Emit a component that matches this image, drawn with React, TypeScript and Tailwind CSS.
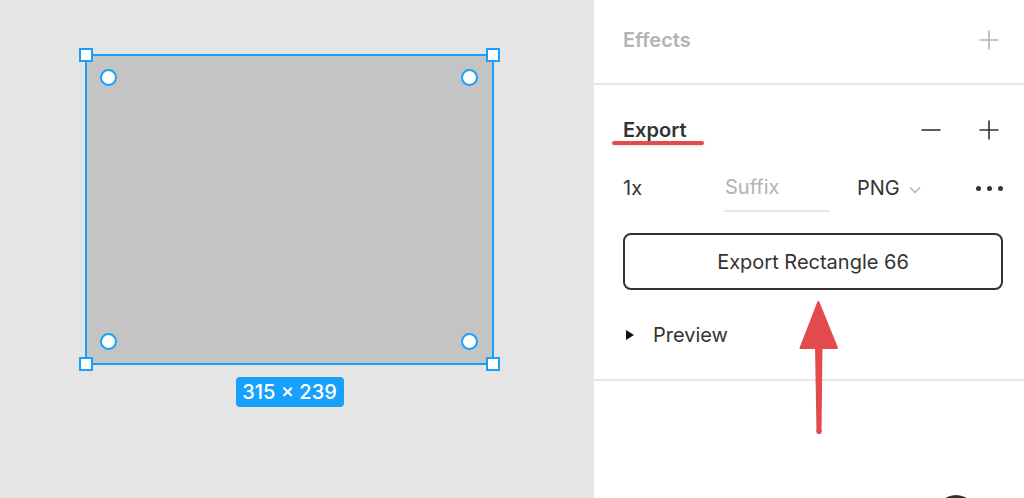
import React from 'react';

const PlusIcon: React.FC<{ color: string }> = ({ color }) => (
  <svg width="20" height="20" viewBox="0 0 20 20" fill="none">
    <path d="M10 0.5V19.5M0.5 10H19.5" stroke={color} strokeWidth="1.6" />
  </svg>
);

const MinusIcon: React.FC<{ color: string }> = ({ color }) => (
  <svg width="20" height="20" viewBox="0 0 20 20" fill="none">
    <path d="M0.5 10H19.5" stroke={color} strokeWidth="1.6" />
  </svg>
);

const Handle: React.FC<{ pos: string }> = ({ pos }) => (
  <div className={`absolute ${pos} w-[14px] h-[14px] bg-white border-2 border-[#18a0fb]`} />
);

const Dot: React.FC<{ pos: string }> = ({ pos }) => (
  <div className={`absolute ${pos} w-[17px] h-[17px] rounded-full bg-white border-2 border-[#18a0fb]`} />
);

export default function App() {
  return (
    <div className="relative flex w-[1024px] h-[498px] overflow-hidden font-['Inter',sans-serif] text-[#333]">
      {/* Canvas */}
      <div className="w-[593px] h-full bg-[#e5e5e5] pl-[85px] pt-[54px] flex flex-col items-start">
        <div className="relative w-[409px] h-[311px] bg-[#c4c4c4] border-[2.5px] border-[#18a0fb]">
          <Handle pos="-left-[8px] -top-[8px]" />
          <Handle pos="-right-[8px] -top-[8px]" />
          <Handle pos="-left-[8px] -bottom-[8px]" />
          <Handle pos="-right-[8px] -bottom-[8px]" />
          <Dot pos="left-[13px] top-[13px]" />
          <Dot pos="right-[14px] top-[13px]" />
          <Dot pos="left-[13px] bottom-[13px]" />
          <Dot pos="right-[14px] bottom-[13px]" />
        </div>
        <div className="w-[409px] flex justify-center mt-[12px]">
          <div className="w-[108px] h-[30px] rounded-[4px] bg-[#18a0fb] text-white text-[20px] font-medium flex items-center justify-center">
            315 × 239
          </div>
        </div>
      </div>

      {/* Properties panel */}
      <div className="w-[431px] h-full bg-white border-l border-[#ebebeb]">
        {/* Effects */}
        <div className="h-[85px] border-b-2 border-[#e8e8e8] flex items-center justify-between pl-[29px] pr-[25px] pb-1">
          <span className="text-[20px] font-semibold text-[#b3b3b3]">Effects</span>
          <PlusIcon color="#b3b3b3" />
        </div>

        {/* Export */}
        <div className="h-[296px] border-b-2 border-[#e8e8e8] pl-[29px] pr-[21px] pt-[25px]">
          <div className="flex items-center justify-between h-10 pr-[4px]">
            <span className="relative text-[20px] leading-6 font-semibold text-[#333]">
              Export
              <span className="absolute -left-[11px] top-[23px] w-[92px] h-[4px] rounded-full bg-[#e24a4e] shadow-sm" />
            </span>
            <div className="flex items-center gap-[38px]">
              <MinusIcon color="#333" />
              <PlusIcon color="#333" />
            </div>
          </div>

          <div className="flex items-start h-[45px] mt-[17px] text-[20px]">
            <div className="w-[101px] h-10 pt-[2px] flex items-center">1x</div>
            <div className="w-[106px] h-[45px] pb-[3px] pl-px flex items-center border-b-2 border-[#e8e8e8] text-[#b3b3b3]">
              Suffix
            </div>
            <div className="ml-[27px] h-10 pt-[2px] flex items-center gap-[9px]">
              <span>PNG</span>
              <svg width="12" height="8" viewBox="0 0 12 8" fill="none" className="mt-[3px]">
                <path d="M1 1.5L6 6.5L11 1.5" stroke="#b3b3b3" strokeWidth="1.3" />
              </svg>
            </div>
            <div className="ml-auto h-10 pt-[2px] flex items-center gap-[6px]">
              <span className="w-[5px] h-[5px] rounded-full bg-[#333]" />
              <span className="w-[5px] h-[5px] rounded-full bg-[#333]" />
              <span className="w-[5px] h-[5px] rounded-full bg-[#333]" />
            </div>
          </div>

          <button className="mt-[21px] w-full h-[57px] rounded-[8px] border-2 border-[#333] text-[20px] text-[#333] flex items-center justify-center bg-white">
            Export Rectangle 66
          </button>

          <div className="mt-[33px] h-6 flex items-center text-[20px]">
            <span className="ml-[3px] w-0 h-0 border-y-[5px] border-y-transparent border-l-[8px] border-l-[#111]" />
            <span className="ml-[19px]">Preview</span>
          </div>
        </div>
      </div>

      {/* Annotation arrow */}
      <svg className="absolute left-[795px] top-[295px]" width="50" height="145" viewBox="0 0 50 145" fill="none">
        <polygon points="23.3,7 5.5,53 42,53" fill="#e24a4e" stroke="#e24a4e" strokeWidth="2" strokeLinejoin="round" />
        <polygon points="20,50 27.5,50 26.5,137 21.5,137" fill="#e24a4e" />
        <circle cx="24" cy="136.5" r="2.6" fill="#e24a4e" />
      </svg>

      {/* Partially visible button at bottom */}
      <div className="absolute left-[936px] top-[495px] w-[40px] h-[40px] rounded-full bg-[#333]" />
    </div>
  );
}
